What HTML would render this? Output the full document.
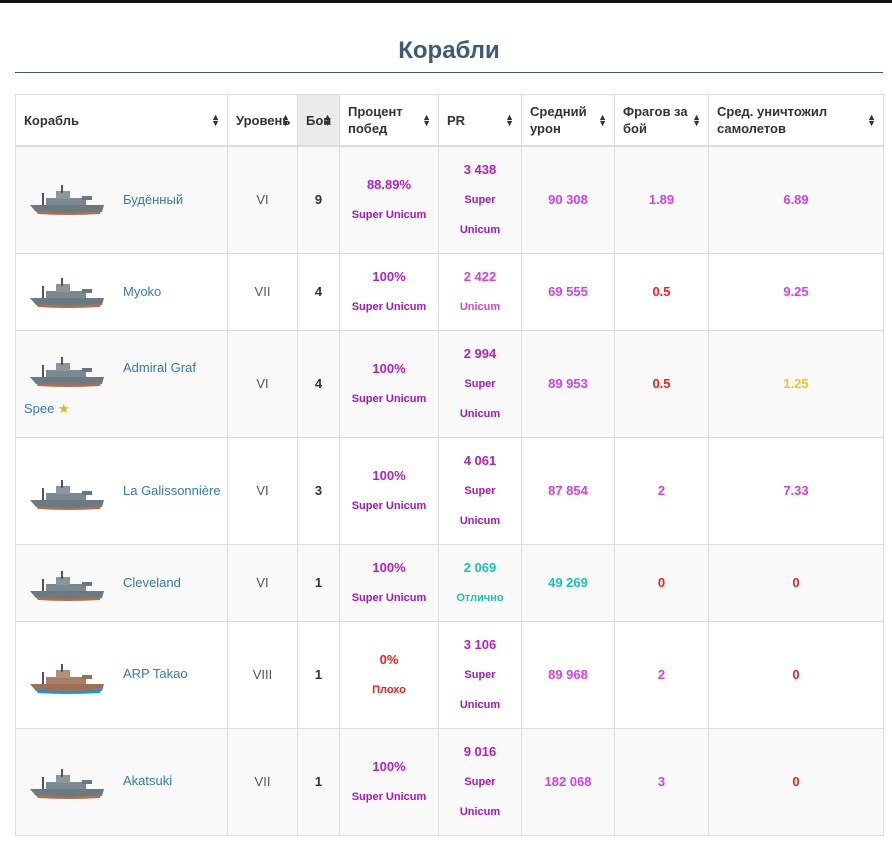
<!DOCTYPE html>
<html><head><meta charset="utf-8">
<style>
body{margin:0;width:892px;height:868px;background:#fff;font-family:"Liberation Sans",Arial,sans-serif;position:relative;overflow:hidden}
.top{position:absolute;left:0;top:0;width:892px;height:3px;background:#111}
h1{position:absolute;left:0;top:37px;width:898px;margin:0;text-align:center;font-size:24px;font-weight:bold;color:#3b5b7b}
.hr{position:absolute;left:15px;top:72px;width:868px;height:1px;background:#3d5a78}
table{position:absolute;left:15px;top:94px;border-collapse:collapse;table-layout:fixed;width:869px;font-size:13px}
td,th{border:1px solid #ddd;padding:0 8px;vertical-align:middle}
th{text-align:left;font-weight:bold;color:#333;height:50px;border-bottom:2px solid #ddd;position:relative;line-height:17px;padding-right:20px}
th .s{position:absolute;right:7px;top:50%;margin-top:-6px;font-size:9px;line-height:6px;color:#333}
tbody tr:nth-child(odd){background:#f9f9f9}
td{text-align:center;font-weight:bold}
td.n{text-align:left;padding:0 8px;font-weight:normal;position:relative}
td.n a{color:#337ab7;text-decoration:none;position:absolute;left:107px}
td.n svg{position:absolute;left:12px}
.lv{font-weight:normal;color:#555}
.b{color:#333}
.p{color:#b31ccf}
.sm{font-size:11px;color:#a715c4}
.m{color:#d43ef0}
.r{color:#ff1a1a}
.t{color:#14c7b0}
.y{color:#f5c518}
.l{line-height:30px}
</style></head><body>
<div class="top"></div>
<h1>Корабли</h1>
<div class="hr"></div>
<svg width="0" height="0" style="position:absolute"><defs>
<g id="ship"><path d="M2 22 L76 22 L74 29 Q40 31 8 29 Z" fill="#6a7a82"/><path d="M8 28 Q40 31 73 28 L72 31 Q40 33 10 31 Z" fill="#b07050"/><rect x="18" y="15" width="40" height="7" fill="#7b8890"/><rect x="28" y="8" width="14" height="8" fill="#8a969c"/><rect x="33" y="2" width="2" height="8" fill="#555"/><rect x="14" y="10" width="2" height="12" fill="#555"/><rect x="54" y="13" width="10" height="4" fill="#6a7780"/></g>
</defs></svg>
<table>
<colgroup><col style="width:212px"><col style="width:70px"><col style="width:42px"><col style="width:99px"><col style="width:83px"><col style="width:93px"><col style="width:94px"><col style="width:175px"></colgroup>
<thead><tr>
<th>Корабль<span class="s">▲<br>▼</span></th>
<th style="padding-right:4px">Уровень<span class="s">▲<br>▼</span></th>
<th style="background:#ebebeb;padding-right:0">Бои<span class="s">▲<br>▼</span></th>
<th>Процент побед<span class="s">▲<br>▼</span></th>
<th>PR<span class="s">▲<br>▼</span></th>
<th>Средний урон<span class="s">▲<br>▼</span></th>
<th>Фрагов за бой<span class="s">▲<br>▼</span></th>
<th>Сред. уничтожил самолетов<span class="s">▲<br>▼</span></th>
</tr></thead>
<tbody>
<tr style="height:107px"><td class="n"><svg width="80" height="36" style="top:36px"><use href="#ship"/></svg><a style="top:45px">Будённый</a></td><td class="lv">VI</td><td class="b">9</td><td><div class="p l">88.89%</div><div class="sm l">Super Unicum</div></td><td><div class="p l">3 438</div><div class="sm l">Super</div><div class="sm l">Unicum</div></td><td class="m">90 308</td><td class="m">1.89</td><td class="m">6.89</td></tr>
<tr style="height:77px"><td class="n"><svg width="80" height="36" style="top:22px"><use href="#ship"/></svg><a style="top:30px">Myoko</a></td><td class="lv">VII</td><td class="b">4</td><td><div class="p l">100%</div><div class="sm l">Super Unicum</div></td><td><div class="m l">2 422</div><div class="m l" style="font-size:11px">Unicum</div></td><td class="m">69 555</td><td class="r">0.5</td><td class="m">9.25</td></tr>
<tr style="height:107px"><td class="n"><svg width="80" height="36" style="top:24px"><use href="#ship"/></svg><a style="top:29px">Admiral Graf</a><a style="left:8px;top:70px">Spee <span style="color:#e8b600">★</span></a></td><td class="lv">VI</td><td class="b">4</td><td><div class="p l">100%</div><div class="sm l">Super Unicum</div></td><td><div class="p l">2 994</div><div class="sm l">Super</div><div class="sm l">Unicum</div></td><td class="m">89 953</td><td class="r">0.5</td><td class="y">1.25</td></tr>
<tr style="height:107px"><td class="n"><svg width="80" height="36" style="top:40px"><use href="#ship"/></svg><a style="top:45px">La Galissonnière</a></td><td class="lv">VI</td><td class="b">3</td><td><div class="p l">100%</div><div class="sm l">Super Unicum</div></td><td><div class="p l">4 061</div><div class="sm l">Super</div><div class="sm l">Unicum</div></td><td class="m">87 854</td><td class="m">2</td><td class="m">7.33</td></tr>
<tr style="height:77px"><td class="n"><svg width="80" height="36" style="top:24px"><use href="#ship"/></svg><a style="top:30px">Cleveland</a></td><td class="lv">VI</td><td class="b">1</td><td><div class="p l">100%</div><div class="sm l">Super Unicum</div></td><td><div class="t l">2 069</div><div class="t l" style="font-size:11px">Отлично</div></td><td class="t">49 269</td><td class="r">0</td><td class="r">0</td></tr>
<tr style="height:107px"><td class="n"><svg width="80" height="36" style="top:40px"><use href="#ship" style="filter:hue-rotate(180deg) saturate(3)"/></svg><a style="top:44px">ARP Takao</a></td><td class="lv">VIII</td><td class="b">1</td><td><div class="r l">0%</div><div class="r l" style="font-size:11px">Плохо</div></td><td><div class="p l">3 106</div><div class="sm l">Super</div><div class="sm l">Unicum</div></td><td class="m">89 968</td><td class="m">2</td><td class="r">0</td></tr>
<tr style="height:107px"><td class="n"><svg width="80" height="36" style="top:38px"><use href="#ship"/></svg><a style="top:44px">Akatsuki</a></td><td class="lv">VII</td><td class="b">1</td><td><div class="p l">100%</div><div class="sm l">Super Unicum</div></td><td><div class="p l">9 016</div><div class="sm l">Super</div><div class="sm l">Unicum</div></td><td class="m">182 068</td><td class="m">3</td><td class="r">0</td></tr>
</tbody></table>
</body></html>
